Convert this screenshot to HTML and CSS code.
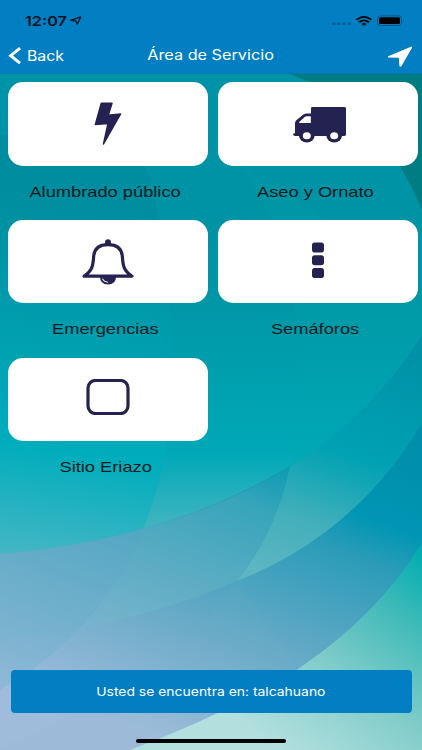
FILE: index.html
```html
<!DOCTYPE html>
<html lang="es">
<head>
    <meta charset="UTF-8">
    <meta name="viewport" content="width=device-width, initial-scale=1.0">
    <title>Área de Servicio</title>
    <link rel="stylesheet" href="styles.css">
</head>
<body>
    <div class="app">
        <svg class="backdrop" viewBox="0 0 422 750" preserveAspectRatio="none" aria-hidden="true">
            <defs>
                <linearGradient id="base" x1="0" y1="74" x2="0" y2="750" gradientUnits="userSpaceOnUse">
                    <stop offset="0" stop-color="#0092a7"/>
                    <stop offset=".3" stop-color="#0094a4"/>
                    <stop offset=".56" stop-color="#00a8b7"/>
                    <stop offset=".66" stop-color="#3bb4bf"/>
                    <stop offset="1" stop-color="#83c4cf"/>
                </linearGradient>
                <linearGradient id="left" x1="85" y1="200" x2="30" y2="555" gradientUnits="userSpaceOnUse">
                    <stop offset="0" stop-color="#008d9f"/>
                    <stop offset=".7" stop-color="#00adbc"/>
                    <stop offset="1" stop-color="#43b6c4"/>
                </linearGradient>
                <linearGradient id="band" x1="290" y1="470" x2="190" y2="750" gradientUnits="userSpaceOnUse">
                    <stop offset="0" stop-color="#0096b2"/>
                    <stop offset=".16" stop-color="#31a0b9"/>
                    <stop offset=".5" stop-color="#62aac6"/>
                    <stop offset="1" stop-color="#9dbcd9"/>
                </linearGradient>
                <linearGradient id="leaf" x1="400" y1="350" x2="320" y2="590" gradientUnits="userSpaceOnUse">
                    <stop offset="0" stop-color="#0091a7"/>
                    <stop offset=".46" stop-color="#00a2b3"/>
                    <stop offset=".75" stop-color="#41afba"/>
                    <stop offset="1" stop-color="#5cb6c1"/>
                </linearGradient>
                <linearGradient id="blue" x1="400" y1="430" x2="270" y2="780" gradientUnits="userSpaceOnUse">
                    <stop offset="0" stop-color="#008dab"/>
                    <stop offset=".25" stop-color="#0096b3"/>
                    <stop offset=".36" stop-color="#2b9cb8"/>
                    <stop offset=".65" stop-color="#63a9c6"/>
                    <stop offset="1" stop-color="#9fbcda"/>
                </linearGradient>
                <linearGradient id="mint" x1="422" y1="550" x2="280" y2="750" gradientUnits="userSpaceOnUse">
                    <stop offset="0" stop-color="#00acb0"/>
                    <stop offset=".3" stop-color="#46bcba"/>
                    <stop offset=".6" stop-color="#80ccc9"/>
                    <stop offset="1" stop-color="#b2e0df"/>
                </linearGradient>
            </defs>
            <rect width="422" height="750" fill="url(#base)"/>
            <path d="M240 165Q300 250 298 373Q298 420 290 466Q372 415 422 335V310Q350 225 240 165Z" fill="#00a5b0" fill-opacity=".15"/>
            <path d="M290 74Q380 108 422 210V74Z" fill="#007d82"/>
            <path d="M0 135Q70 138 142 155Q175 250 172 383Q170 465 143 529Q80 548 0 554Z" fill="url(#left)"/>
            <path d="M0 554Q165 540 290 466Q277 532 237 581L200 750H0Z" fill="url(#band)"/>
            <path d="M0 554Q80 548 143 529Q120 585 80 628Q45 665 0 690Z" fill="#5aaccb" fill-opacity=".3"/>
            <path d="M143 529Q125 580 80 628Q165 612 237 581Q277 532 290 466Q220 510 143 529Z" fill="#5fc0c4" fill-opacity=".15"/>
            <path d="M290 466Q372 415 422 335V423Q355 535 237 581Q277 532 290 466Z" fill="url(#leaf)"/>
            <path d="M0 641Q135 625 237 581Q355 535 422 423V750H0Z" fill="url(#blue)" fill-opacity=".2"/>
            <path d="M80 628Q165 612 237 581Q355 535 422 423V750H0V690Q45 665 80 628Z" fill="url(#blue)"/>
            <path d="M237 581Q200 632 143 670Q80 715 0 748V750H130Q225 715 298 669L237 581Z" fill="#85c0d0" fill-opacity=".06"/>
            <path d="M422 543Q378 615 298 669Q225 715 130 750H422Z" fill="url(#mint)"/>
        </svg>

        <header class="header">
            <div class="status-bar">
                <div class="clock">
                    <span class="wide time">12:07</span>
                    <svg width="12" height="10" viewBox="0 0 12 10"><path d="M.8 4.4L10.6 .9L7.2 8.2L5.8 4.9Z" fill="none" stroke="#06121f" stroke-width="1.3" stroke-linejoin="round"/></svg>
                </div>
                <div class="indicators">
                    <svg width="20" height="12" viewBox="0 0 20 12"><g fill="#075f9a"><rect x="0" y="7.5" width="3.6" height="2.6" rx="1"/><rect x="5.1" y="7.5" width="3.6" height="2.6" rx="1"/><rect x="10.2" y="7.5" width="3.6" height="2.6" rx="1"/><rect x="15.3" y="7.5" width="3.6" height="2.6" rx="1"/></g></svg>
                    <svg class="wifi" width="16" height="11" viewBox="0 0 16 11"><g fill="none" stroke="#000" stroke-width="1.7"><path d="M.6 3.8Q8-2 15.4 3.8"/><path d="M3 6.3Q8 2.5 13 6.3"/></g><path d="M5.4 7.9Q8 6 10.6 7.9L8 9.8Z"/></svg>
                    <svg class="battery" width="28" height="12" viewBox="0 0 28 12"><rect x=".5" y=".9" width="24" height="9.6" rx="3" fill="none" stroke="#075489"/><rect x="2" y="2.3" width="21" height="6.8" rx="1.5"/><path d="M26 4.2Q27.6 5.8 26 7.4Z" fill="#075489"/></svg>
                </div>
            </div>
            <nav class="nav-bar">
                <a class="back">
                    <svg width="13" height="18" viewBox="0 0 13 18"><path d="M12 1.2L2.7 8.7L12 16.2" fill="none" stroke="#fff" stroke-width="3"/></svg>
                    <span class="wide back-label">Back</span>
                </a>
                <h1 class="title"><span class="wide">Área de Servicio</span></h1>
                <svg width="26" height="22" viewBox="0 0 26 22"><path d="M1.2 10.3L24 .7Q25.6.2 25 1.7L14.5 20Q13.6 21.2 12.4 20.3L11.8 11.8L1.5 11.4Q.2 11 1.2 10.3Z" fill="#fff"/></svg>
            </nav>
        </header>

        <main class="services">
            <div class="service">
                <div class="card">
                    <svg width="28" height="44" viewBox="0 0 28 44"><path d="M7.3 1.2H18L14.2 13.2L26.6 12L9.5 42L14 21.6L1.4 22.5Z" fill="#242250" stroke="#242250" stroke-width="1.5" stroke-linejoin="round"/></svg>
                </div>
                <p><span class="wide">Alumbrado público</span></p>
            </div>
            <div class="service">
                <div class="card">
                    <svg class="truck" width="54" height="38" viewBox="0 0 54 38"><g fill="#242250"><path d="M18 2Q18 1 19.5 1H51.5Q53 1 53 2.5V28.5Q53 30 51 30H2Q0 29.3 0 28.3Q.2 27.3 2 27.2V17Q2 15.5 3.6 14L10 8.8Q12 7.5 14 7.5H18Z"/><ellipse cx="13.8" cy="29.8" rx="7.8" ry="6.8"/><ellipse cx="41.2" cy="29.8" rx="7.8" ry="6.8"/></g><path d="M6.2 17V16L11.7 11Q12.5 10.3 13.5 10.3H17.8V17Z" fill="#fff"/><ellipse cx="13.8" cy="29.8" rx="4" ry="3.5" fill="#fff"/><ellipse cx="41.2" cy="29.8" rx="4" ry="3.5" fill="#fff"/></svg>
                </div>
                <p><span class="wide">Aseo y Ornato</span></p>
            </div>
            <div class="service">
                <div class="card">
                    <svg width="52" height="46" viewBox="0 0 52 46"><circle cx="26" cy="3.2" r="3" fill="#242250"/><path d="M2 37.2C11 31 11 26 11.7 17C12.5 9 18 5.6 26 5.6C34 5.6 39.5 9 40.3 17C41 26 41 31 50 37.2Z" fill="#fff" stroke="#242250" stroke-width="3.2" stroke-linejoin="round"/><path d="M18 37.5H34Q34 45.4 26 45.4Q18 45.4 18 37.5Z" fill="#242250"/><path d="M20.5 39.6Q21.7 42.8 26.2 43.2" fill="none" stroke="#fff" stroke-width="1.1"/></svg>
                </div>
                <p><span class="wide">Emergencias</span></p>
            </div>
            <div class="service">
                <div class="card">
                    <svg class="dots" width="12" height="37" viewBox="0 0 12 37"><g fill="#242250"><rect y=".5" width="12" height="10" rx="2.8"/><rect y="13.3" width="12" height="10" rx="2.8"/><rect y="26" width="12" height="10" rx="2.8"/></g></svg>
                </div>
                <p><span class="wide">Semáforos</span></p>
            </div>
            <div class="service">
                <div class="card">
                    <svg class="square" width="44" height="36" viewBox="0 0 44 36"><rect x="2" y="1.5" width="40" height="33" rx="7.5" fill="none" stroke="#242250" stroke-width="3.2"/></svg>
                </div>
                <p><span class="wide">Sitio Eriazo</span></p>
            </div>
        </main>

        <footer class="footer">
            <div class="location"><span class="wide">Usted se encuentra en: talcahuano</span></div>
            <div class="home-indicator"></div>
        </footer>
    </div>
</body>
</html>
```
FILE: styles.css
```css
*{
    margin: 0;
    padding: 0;
    box-sizing: border-box;
}
body{
    height: 100vh;
    overflow: hidden;
    font-family: Inter, "Liberation Sans", sans-serif;
}
svg{
    display: block;
    flex: none;
}
.app{
    position: relative;
    height: 750px;
    display: flex;
    flex-direction: column;
}
.backdrop{
    position: absolute;
    z-index: -1;
    width: 100%;
    height: 100%;
}
/* letters are stretched sideways all over the app */
.wide{
    display: inline-block;
    white-space: nowrap;
    transform: scaleX(1.16);
}
.header{
    height: 74px;
    background-color: #027ec3;
    border-bottom: 1px solid #0877ae;
}
.status-bar{
    height: 38px;
    padding: 4px 17px 0 25px;
    display: flex;
    align-items: center;
    justify-content: space-between;
}
.clock{
    display: flex;
    align-items: center;
    gap: 11px;
}
.time{
    font-size: 13px;
    font-weight: 600;
    color: #06121f;
    transform: scaleX(1.25);
    transform-origin: left;
}
.indicators{
    display: flex;
    align-items: center;
}
.wifi{
    margin: 0 5px 0 4px;
}
.nav-bar{
    height: 35px;
    padding: 0 9px 0 8px;
    display: grid;
    grid-template-columns: 80px 1fr 80px;
    align-items: center;
    color: white;
}
.nav-bar > svg{
    justify-self: end;
    margin-top: 2px;
}
.back{
    display: flex;
    align-items: center;
    gap: 6px;
}
.back-label{
    font-size: 14px;
    transform: scaleX(1.13);
    transform-origin: left;
}
.title{
    font-size: 14px;
    font-weight: 400;
    line-height: 18px;
    padding-bottom: 1px;
    text-align: center;
}
.services{
    flex: 1;
    padding: 8px 4px 0 8px;
    display: grid;
    grid-template-columns: 200px 200px;
    grid-auto-rows: 137.8px;
    align-content: start;
    column-gap: 10px;
}
.card{
    height: 83.5px;
    border-radius: 15px;
    background-color: white;
    display: flex;
    align-items: center;
    justify-content: center;
}
.truck{
    margin: 2px 0 0 4px;
}
.dots{
    margin-bottom: 3px;
}
.square{
    margin-bottom: 4px;
}
.service p{
    margin: 16px 5px 0 0;
    font-family: "Liberation Sans", Arial, sans-serif;
    font-size: 14.5px;
    line-height: 20px;
    text-align: center;
    color: #071b20;
}
.service .wide{
    transform: scaleX(1.26);
}
.footer{
    height: 80px;
    padding: 0 10.5px;
}
.location{
    height: 43px;
    border-radius: 4px;
    background-color: #027ec3;
    color: white;
    font-size: 12px;
    display: flex;
    align-items: center;
    justify-content: center;
}
.home-indicator{
    width: 150px;
    height: 4px;
    margin: 26px auto 0;
    border-radius: 2px;
    background-color: black;
}
```
